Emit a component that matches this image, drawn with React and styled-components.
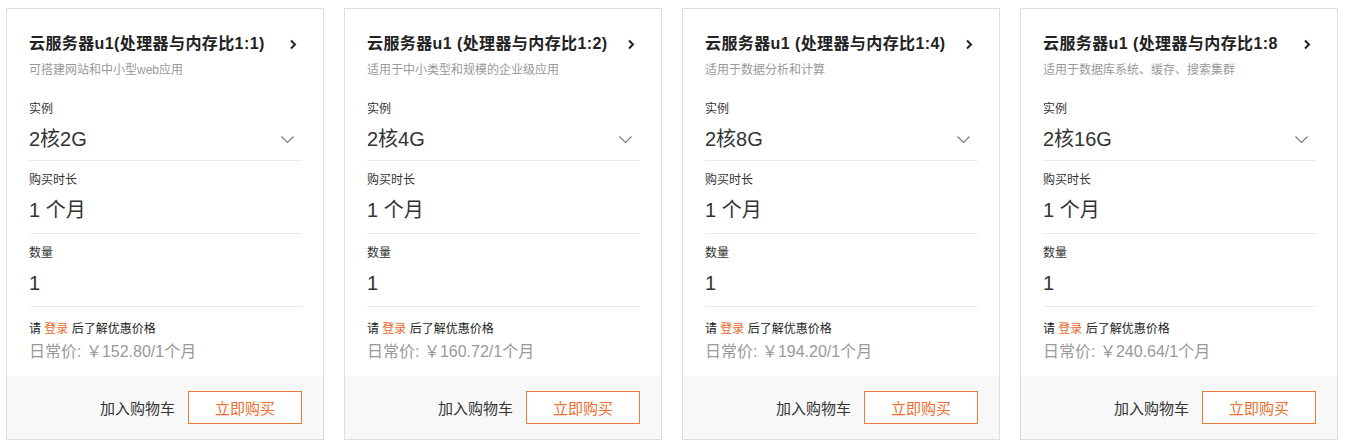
import styled, { createGlobalStyle } from "styled-components";

const GlobalStyle = createGlobalStyle`
  body {
    margin: 0;
    background: #ffffff;
    font-family: "Liberation Sans", "Noto Sans CJK SC", Arial, sans-serif;
    color: #333;
  }
`;

const products = [
  {
    title: "云服务器u1(处理器与内存比1:1)",
    desc: "可搭建网站和中小型web应用",
    spec: "2核2G",
    price: "152.80",
  },
  {
    title: "云服务器u1 (处理器与内存比1:2)",
    desc: "适用于中小类型和规模的企业级应用",
    spec: "2核4G",
    price: "160.72",
  },
  {
    title: "云服务器u1 (处理器与内存比1:4)",
    desc: "适用于数据分析和计算",
    spec: "2核8G",
    price: "194.20",
  },
  {
    title: "云服务器u1 (处理器与内存比1:8",
    desc: "适用于数据库系统、缓存、搜索集群",
    spec: "2核16G",
    price: "240.64",
  },
];

const Grid = styled.div`
  display: flex;
  gap: 20px;
  padding: 8px 6px;
`;

const Card = styled.div`
  width: 318px;
  box-sizing: border-box;
  border: 1px solid #dedede;
  background: #fff;
  display: flex;
  flex-direction: column;
`;

const Body = styled.div`
  padding: 23px 21px 12px 22px;
`;

const TitleRow = styled.div`
  display: flex;
  align-items: center;
  height: 24px;
`;

const Title = styled.h3`
  margin: 0;
  flex: 1;
  font-size: 16px;
  font-weight: bold;
  line-height: 24px;
  letter-spacing: 0.4px;
  color: #222;
  white-space: nowrap;
  overflow: hidden;
  max-width: 240px;
`;

const Arrow = styled.span`
  display: flex;
  margin-left: auto;
  margin-right: 5px;
  color: #222;
`;

const Desc = styled.p`
  margin: 5px 0 0;
  font-size: 12px;
  line-height: 18px;
  color: #999;
`;

const Field = styled.div`
  padding: ${(p) => (p.first ? "21px 0 7px" : "10px 0 9px")};
  border-bottom: 1px solid #ebebeb;
`;

const Label = styled.div`
  font-size: 12px;
  line-height: 18px;
  color: #333;
`;

const Value = styled.div`
  margin-top: 7px;
  display: flex;
  align-items: center;
  justify-content: space-between;
  font-size: 20px;
  line-height: 28px;
  color: #333;
`;

const Caret = styled.span`
  display: flex;
  margin-right: 8px;
  color: #777;
`;

const Login = styled.div`
  margin-top: 13px;
  font-size: 12px;
  line-height: 18px;
  color: #222;

  a {
    color: #e9692c;
    text-decoration: none;
  }
`;

const Price = styled.div`
  margin-top: 2px;
  font-size: 16px;
  line-height: 24px;
  color: #999;
`;

const Footer = styled.div`
  margin-top: auto;
  height: 63px;
  background: #f8f8f8;
  display: flex;
  align-items: center;
  justify-content: flex-end;
  padding: 0 21px;
`;

const CartLink = styled.span`
  font-size: 15px;
  color: #333;
  margin-right: 13px;
`;

const BuyButton = styled.button`
  width: 114px;
  height: 33px;
  border: 1px solid #ec7a3a;
  background: #fff;
  color: #ec6e2f;
  font-family: inherit;
  font-size: 15px;
  cursor: pointer;
`;

const ChevronRight = () => (
  <svg width="8" height="11" viewBox="0 0 8 11">
    <path d="M2 1.5 L6 5.5 L2 9.5" fill="none" stroke="currentColor" strokeWidth="2" />
  </svg>
);

const ChevronDown = () => (
  <svg width="13" height="7" viewBox="0 0 13 7">
    <path d="M0.5 0.5 L6.5 6.5 L12.5 0.5" fill="none" stroke="currentColor" strokeWidth="1.1" />
  </svg>
);

const ProductCard = ({ title, desc, spec, price }) => (
  <Card>
    <Body>
      <TitleRow>
        <Title>{title}</Title>
        <Arrow>
          <ChevronRight />
        </Arrow>
      </TitleRow>
      <Desc>{desc}</Desc>
      <Field first>
        <Label>实例</Label>
        <Value>
          {spec}
          <Caret>
            <ChevronDown />
          </Caret>
        </Value>
      </Field>
      <Field>
        <Label>购买时长</Label>
        <Value>1 个月</Value>
      </Field>
      <Field>
        <Label>数量</Label>
        <Value>1</Value>
      </Field>
      <Login>
        请 <a href="#">登录</a> 后了解优惠价格
      </Login>
      <Price>日常价: ￥{price}/1个月</Price>
    </Body>
    <Footer>
      <CartLink>加入购物车</CartLink>
      <BuyButton>立即购买</BuyButton>
    </Footer>
  </Card>
);

export default function App() {
  return (
    <>
      <GlobalStyle />
      <Grid>
        {products.map((p) => (
          <ProductCard key={p.spec} {...p} />
        ))}
      </Grid>
    </>
  );
}
